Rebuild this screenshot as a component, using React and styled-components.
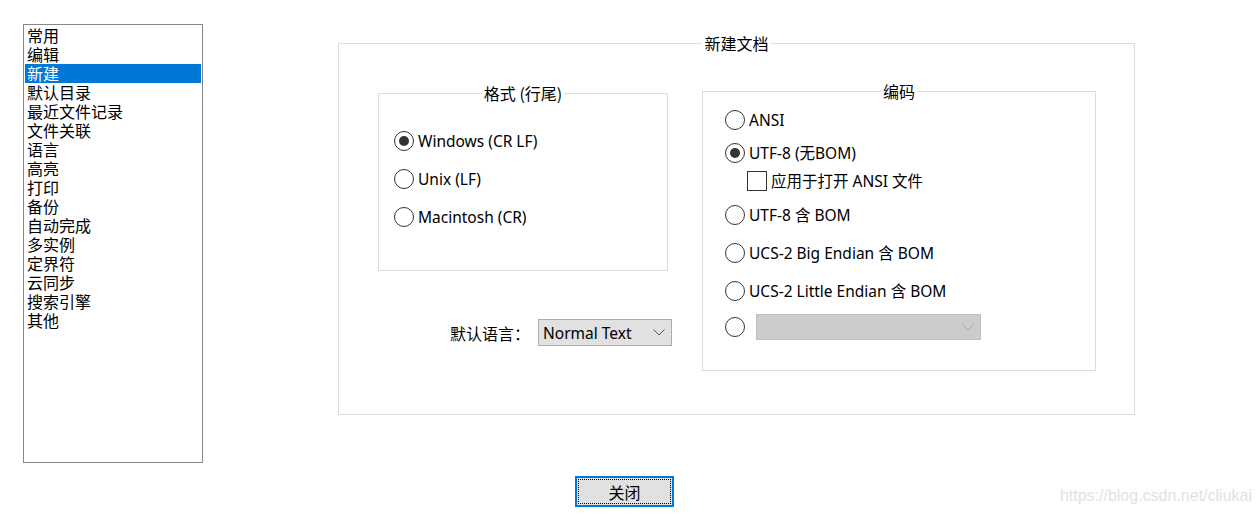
import React from 'react'
import styled, { createGlobalStyle } from 'styled-components'

const GlobalStyle = createGlobalStyle`
  html, body {
    margin: 0;
    padding: 0;
    background: #ffffff;
  }
  body {
    font-family: "Noto Sans", "Noto Sans CJK SC", sans-serif;
    color: #000000;
  }
`

const Page = styled.div`
  position: relative;
  display: flex;
  align-items: flex-start;
  box-sizing: border-box;
  min-height: 100vh;
  padding: 24px 0 0 23px;
`

const ListBox = styled.ul`
  box-sizing: border-box;
  list-style: none;
  margin: 0;
  padding: 1px;
  width: 180px;
  height: 439px;
  border: 1px solid #828790;
  font-family: "Noto Sans CJK SC", sans-serif;
  font-size: 16px;
  line-height: 19px;
`

const ListItem = styled.li`
  height: 19px;
  padding-left: 2px;
  background: ${(p) => (p.$selected ? '#0078d7' : 'transparent')};
  color: ${(p) => (p.$selected ? '#ffffff' : '#000000')};
  white-space: nowrap;
`

const Main = styled.div`
  display: flex;
  flex-direction: column;
  margin-left: 135px;
  margin-top: 9px;
`

// group box: legend is centred on the full width, content is padded inside
const Group = styled.fieldset`
  box-sizing: border-box;
  margin: 0;
  padding: 0;
  min-width: 0;
  border: 1px solid #dcdcdc;
  width: ${(p) => p.$w}px;
  height: ${(p) => p.$h}px;
  margin-top: ${(p) => p.$mt || 0}px;
  margin-left: ${(p) => p.$ml || 0}px;
`

const Legend = styled.legend`
  margin: 0 auto;
  padding: 0 2px;
  font-family: "Noto Sans CJK SC", sans-serif;
  font-size: 16px;
  line-height: 20px;
`

const GroupBody = styled.div`
  padding: ${(p) => p.$pad};
`

const Columns = styled.div`
  display: flex;
  align-items: flex-start;
`

const LeftColumn = styled.div`
  display: flex;
  flex-direction: column;
  width: 290px;
`

const OptionRow = styled.div`
  display: flex;
  align-items: center;
  height: ${(p) => p.$h || 20}px;
  margin-top: ${(p) => p.$mt || 0}px;
  margin-left: ${(p) => p.$indent || 0}px;
`

const RadioCircle = styled.span`
  box-sizing: border-box;
  flex: none;
  width: 20px;
  height: 20px;
  border-radius: 50%;
  border: 1px solid #333333;
  display: flex;
  align-items: center;
  justify-content: center;

  &::after {
    content: '';
    display: ${(p) => (p.$checked ? 'block' : 'none')};
    width: 10px;
    height: 10px;
    border-radius: 50%;
    background: #333333;
  }
`

const CheckBox = styled.span`
  box-sizing: border-box;
  flex: none;
  width: 20px;
  height: 20px;
  border: 1px solid #333333;
`

const OptionText = styled.span`
  margin-left: 4px;
  font-size: 15.5px;
  line-height: 20px;
  white-space: nowrap;
`

const LangRow = styled.div`
  display: flex;
  align-items: center;
  gap: 10px;
  margin-top: 48px;
  padding-left: 72px;
  white-space: nowrap;
`

const LangLabel = styled.span`
  min-width: 78px;
  font-family: "Noto Sans CJK SC", sans-serif;
  font-size: 16px;
`

const Select = styled.div`
  box-sizing: border-box;
  flex: none;
  display: flex;
  align-items: center;
  justify-content: space-between;
  width: ${(p) => p.$w}px;
  height: ${(p) => p.$h}px;
  padding: 0 6px 0 4px;
  background: ${(p) => (p.$disabled ? '#cccccc' : '#e1e1e1')};
  border: 1px solid ${(p) => (p.$disabled ? '#bfbfbf' : '#adadad')};
  margin-left: ${(p) => p.$ml || 0}px;
  font-size: 15.5px;
`

const Chevron = ({ color }) => (
  <svg width="12" height="7" viewBox="0 0 12 7">
    <polyline points="0.5,0.5 6,6 11.5,0.5" fill="none" stroke={color} strokeWidth="1" />
  </svg>
)

const CloseButton = styled.button`
  box-sizing: border-box;
  width: 99px;
  height: 31px;
  margin-top: 61px;
  margin-left: 237px;
  padding: 1px;
  border: 2px solid #0078d7;
  background: #e1e1e1;
  font-family: "Noto Sans CJK SC", sans-serif;
  font-size: 16px;
  color: #000000;
`

const FocusRect = styled.span`
  box-sizing: border-box;
  display: flex;
  align-items: center;
  justify-content: center;
  width: 100%;
  height: 100%;
  border: 1px dotted #000000;
`

const Watermark = styled.div`
  position: absolute;
  right: 8px;
  bottom: 18px;
  font-family: "Liberation Sans", sans-serif;
  font-size: 16px;
  color: #e2e2e2;
`

const menu = [
  '常用',
  '编辑',
  '新建',
  '默认目录',
  '最近文件记录',
  '文件关联',
  '语言',
  '高亮',
  '打印',
  '备份',
  '自动完成',
  '多实例',
  '定界符',
  '云同步',
  '搜索引擎',
  '其他',
]

const formats = [
  { label: 'Windows (CR LF)', checked: true },
  { label: 'Unix (LF)' },
  { label: 'Macintosh (CR)' },
]

const App = () => {
  return (
    <>
      <GlobalStyle />
      <Page>
        <ListBox>
          {menu.map((name) => (
            <ListItem key={name} $selected={name === '新建'}>
              {name}
            </ListItem>
          ))}
        </ListBox>

        <Main>
          <Group $w={797} $h={382}>
            <Legend>新建文档</Legend>
            <GroupBody $pad="28px 0 0 39px">
              <Columns>
                <LeftColumn>
                  <Group $w={290} $h={188} $mt={2}>
                    <Legend>格式 (行尾)</Legend>
                    <GroupBody $pad="28px 0 0 15px">
                      {formats.map((f, i) => (
                        <OptionRow key={f.label} $mt={i === 0 ? 0 : 18}>
                          <RadioCircle $checked={f.checked} />
                          <OptionText>{f.label}</OptionText>
                        </OptionRow>
                      ))}
                    </GroupBody>
                  </Group>
                  <LangRow>
                    <LangLabel>默认语言：</LangLabel>
                    <Select $w={134} $h={27}>
                      <span>Normal Text</span>
                      <Chevron color="#555555" />
                    </Select>
                  </LangRow>
                </LeftColumn>

                <Group $w={394} $h={290} $ml={34}>
                  <Legend>编码</Legend>
                  <GroupBody $pad="9px 0 0 22px">
                    <OptionRow>
                      <RadioCircle />
                      <OptionText>ANSI</OptionText>
                    </OptionRow>
                    <OptionRow $mt={13}>
                      <RadioCircle $checked />
                      <OptionText>UTF-8 (无BOM)</OptionText>
                    </OptionRow>
                    <OptionRow $mt={8} $indent={22}>
                      <CheckBox />
                      <OptionText>应用于打开 ANSI 文件</OptionText>
                    </OptionRow>
                    <OptionRow $mt={14}>
                      <RadioCircle />
                      <OptionText>UTF-8 含 BOM</OptionText>
                    </OptionRow>
                    <OptionRow $mt={18}>
                      <RadioCircle />
                      <OptionText>UCS-2 Big Endian 含 BOM</OptionText>
                    </OptionRow>
                    <OptionRow $mt={18}>
                      <RadioCircle />
                      <OptionText>UCS-2 Little Endian 含 BOM</OptionText>
                    </OptionRow>
                    <OptionRow $mt={13} $h={26}>
                      <RadioCircle />
                      <Select $w={225} $h={26} $ml={11} $disabled>
                        <span />
                        <Chevron color="#a6a6a6" />
                      </Select>
                    </OptionRow>
                  </GroupBody>
                </Group>
              </Columns>
            </GroupBody>
          </Group>

          <CloseButton>
            <FocusRect>关闭</FocusRect>
          </CloseButton>
        </Main>

        <Watermark>https://blog.csdn.net/cliukai</Watermark>
      </Page>
    </>
  )
}

export default App
